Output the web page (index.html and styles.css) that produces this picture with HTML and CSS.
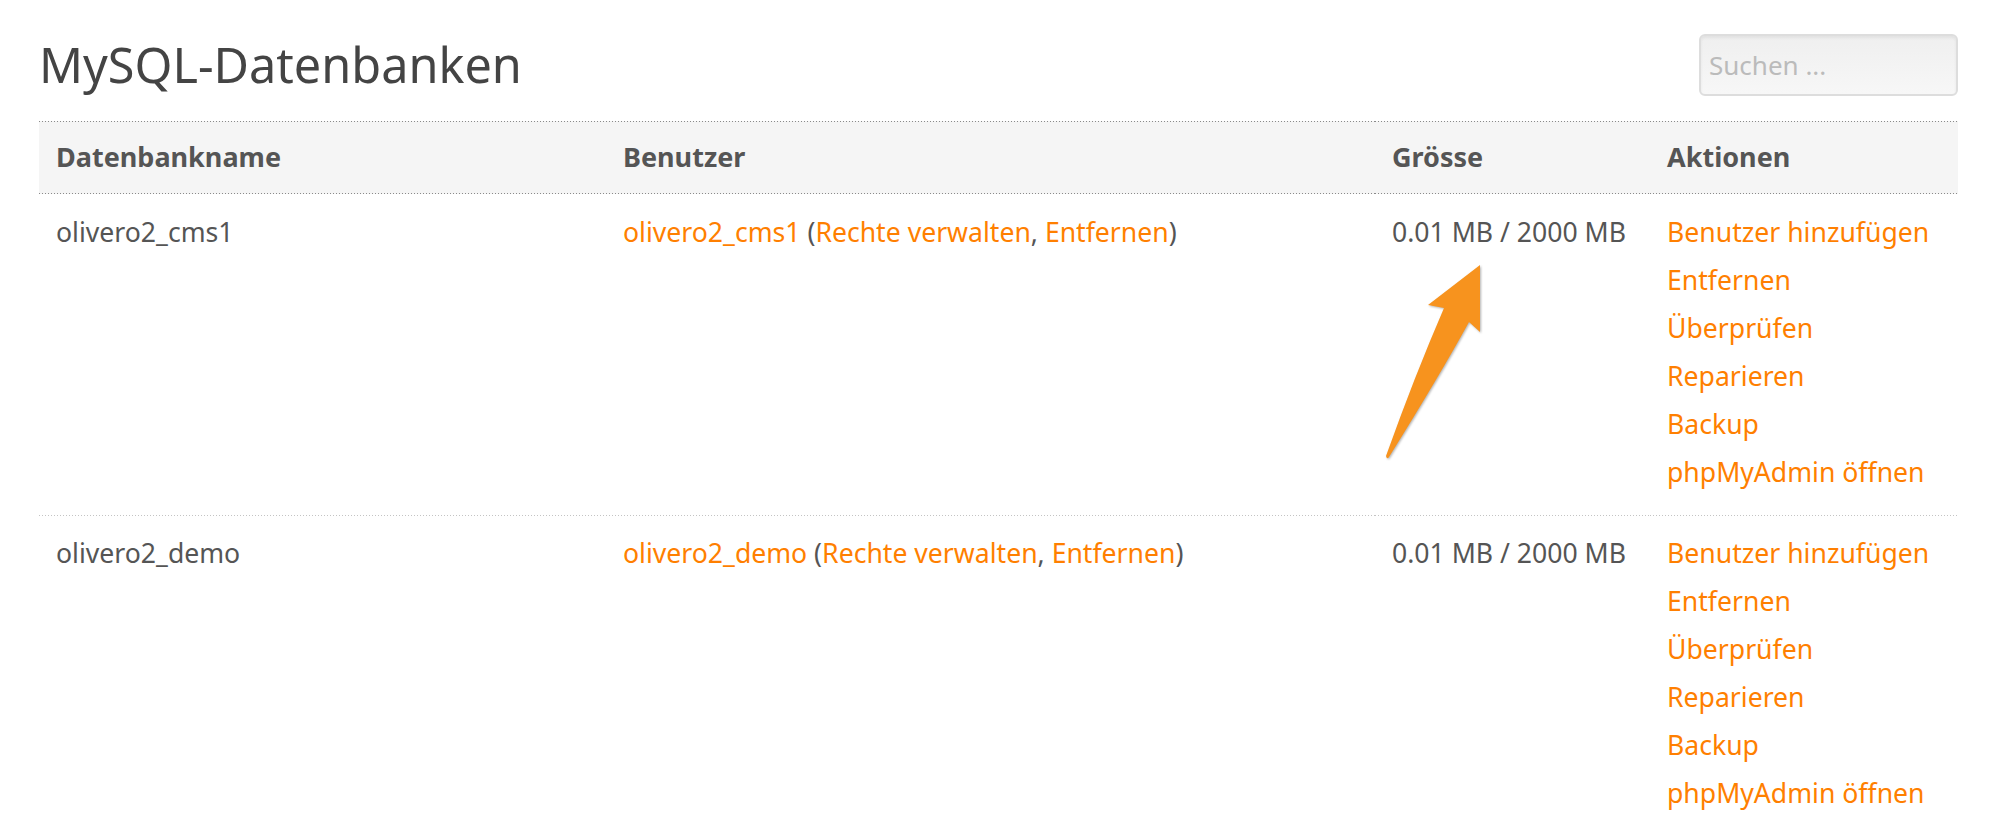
FILE: index.html
```html
<!DOCTYPE html>
<html lang="de">
<head>
<meta charset="utf-8">
<title>MySQL-Datenbanken</title>
<link rel="stylesheet" href="styles.css">
</head>
<body>
<div class="page">
  <div class="top">
    <h1 class="title">MySQL-Datenbanken</h1>
    <input class="search" type="text" placeholder="Suchen ...">
  </div>
  <table class="dbtable">
    <colgroup>
      <col class="c1"><col class="c2"><col class="c3"><col class="c4">
    </colgroup>
    <thead>
      <tr>
        <th>Datenbankname</th>
        <th>Benutzer</th>
        <th>Grösse</th>
        <th>Aktionen</th>
      </tr>
    </thead>
    <tbody>
      <tr>
        <td>olivero2_cms1</td>
        <td><a href="#">olivero2_cms1</a> (<a href="#">Rechte verwalten</a>, <a href="#">Entfernen</a>)</td>
        <td>0.01 MB / 2000 MB</td>
        <td>
          <ul class="actions">
            <li><a href="#">Benutzer hinzufügen</a></li>
            <li><a href="#">Entfernen</a></li>
            <li><a href="#">Überprüfen</a></li>
            <li><a href="#">Reparieren</a></li>
            <li><a href="#">Backup</a></li>
            <li><a href="#">phpMyAdmin öffnen</a></li>
          </ul>
        </td>
      </tr>
      <tr class="next">
        <td>olivero2_demo</td>
        <td><a href="#">olivero2_demo</a> (<a href="#">Rechte verwalten</a>, <a href="#">Entfernen</a>)</td>
        <td>0.01 MB / 2000 MB</td>
        <td>
          <ul class="actions">
            <li><a href="#">Benutzer hinzufügen</a></li>
            <li><a href="#">Entfernen</a></li>
            <li><a href="#">Überprüfen</a></li>
            <li><a href="#">Reparieren</a></li>
            <li><a href="#">Backup</a></li>
            <li><a href="#">phpMyAdmin öffnen</a></li>
          </ul>
        </td>
      </tr>
    </tbody>
  </table>
  <svg class="arrow" width="110" height="200" viewBox="0 0 110 200" aria-hidden="true">
    <path d="M95 0 L95 67 L84 57 Q55 110 4 192 Q2 195 1 191 Q30 110 59 43 L43 40 Z" fill="#f7931e"/>
  </svg>
</div>
</body>
</html>
```

FILE: styles.css
```css
html, body {
  margin: 0;
  padding: 0;
  background: #ffffff;
}

body {
  font-family: "Noto Sans", "Open Sans", sans-serif;
  color: #555555;
  font-size: 26.6px;
}

.page {
  position: relative;
  margin-left: 39px;
  width: 1919px;
}

.top {
  display: flex;
  justify-content: space-between;
  align-items: flex-start;
  padding-top: 34px;
  height: 121px;
  box-sizing: border-box;
}

.title {
  margin: 1px 0 0 0;
  font-size: 48.6px;
  font-weight: normal;
  line-height: 1.2;
  color: #444444;
}

.search {
  width: 259px;
  height: 62px;
  box-sizing: border-box;
  border: 2px solid #dddddd;
  border-radius: 6px;
  background: linear-gradient(#efefef, #f7f7f7);
  box-shadow: inset 0 2px 3px rgba(0, 0, 0, 0.06);
  font-family: "Noto Sans", "Open Sans", sans-serif;
  font-size: 26px;
  padding: 0 8px;
  color: #555555;
}

.search::placeholder {
  color: #bbbbbb;
}

.dbtable {
  width: 1919px;
  border-collapse: collapse;
  border-spacing: 0;
  table-layout: fixed;
}

.c1 { width: 567px; }
.c2 { width: 769px; }
.c3 { width: 275px; }
.c4 { width: 308px; }

.dbtable th {
  text-align: left;
  font-weight: bold;
  font-size: 27px;
  color: #555555;
  line-height: 48px;
  padding: 12px 0 13px 17px;
  background:
    linear-gradient(to right, #8a8a8a 1px, transparent 1px) left top / 3px 1px repeat-x,
    linear-gradient(to right, #8a8a8a 1px, transparent 1px) left bottom / 3px 1px repeat-x,
    #f5f5f5;
}

.dbtable td {
  vertical-align: top;
  line-height: 48px;
  padding: 14px 0 19px 17px;
  white-space: nowrap;
}

.dbtable .next td {
  padding-top: 14px;
  background: linear-gradient(to right, #c4c4c4 1px, transparent 1px) left top / 3px 1px repeat-x;
}

.dbtable a {
  color: #ff7f00;
  text-decoration: none;
}

.actions {
  list-style: none;
  margin: 0;
  padding: 0;
}

.arrow {
  position: absolute;
  left: 1346px;
  top: 265px;
  filter: drop-shadow(1px 1px 1px rgba(0, 0, 0, 0.3));
}
```
